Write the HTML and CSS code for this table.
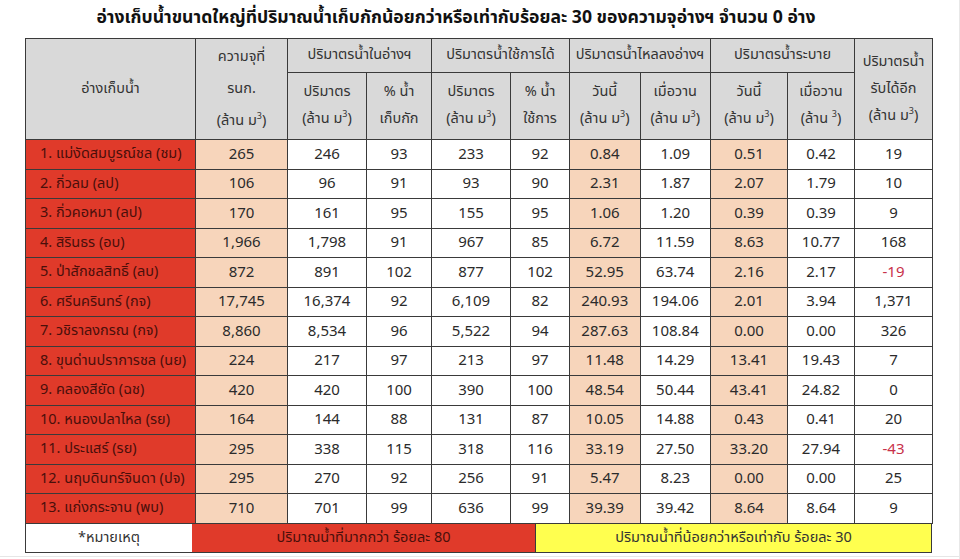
FILE: index.html
```html
<!DOCTYPE html>
<html lang="th">
<head>
<meta charset="utf-8">
<title>อ่างเก็บน้ำขนาดใหญ่</title>
<link rel="stylesheet" href="styles.css">
</head>
<body>
<div class="page">
  <h1 class="title">อ่างเก็บน้ำขนาดใหญ่ที่ปริมาณน้ำเก็บกักน้อยกว่าหรือเท่ากับร้อยละ 30 ของความจุอ่างฯ จำนวน 0 อ่าง</h1>
  <table class="grid">
    <colgroup>
      <col class="c-name"><col class="c-cap"><col class="c-a"><col class="c-b"><col class="c-a"><col class="c-c"><col class="c-d"><col class="c-d"><col class="c-e"><col class="c-f"><col class="c-g">
    </colgroup>
    <thead>
      <tr class="h1">
        <th rowspan="2" class="hname">อ่างเก็บน้ำ</th>
        <th rowspan="2" class="hcap">ความจุที่<br>รนก.<br>(ล้าน ม<sup>3</sup>)</th>
        <th colspan="2">ปริมาตรน้ำในอ่างฯ</th>
        <th colspan="2">ปริมาตรน้ำใช้การได้</th>
        <th colspan="2">ปริมาตรน้ำไหลลงอ่างฯ</th>
        <th colspan="2">ปริมาตรน้ำระบาย</th>
        <th rowspan="2" class="hmore">ปริมาตรน้ำ<br>รับได้อีก<br>(ล้าน ม<sup>3</sup>)</th>
      </tr>
      <tr class="h2">
        <th>ปริมาตร<br>(ล้าน ม<sup>3</sup>)</th>
        <th>% น้ำ<br>เก็บกัก</th>
        <th>ปริมาตร<br>(ล้าน ม<sup>3</sup>)</th>
        <th>% น้ำ<br>ใช้การ</th>
        <th>วันนี้<br>(ล้าน ม<sup>3</sup>)</th>
        <th>เมื่อวาน<br>(ล้าน ม<sup>3</sup>)</th>
        <th>วันนี้<br>(ล้าน ม<sup>3</sup>)</th>
        <th>เมื่อวาน<br>(ล้าน <sup>3</sup>)</th>
      </tr>
    </thead>
    <tbody>
      <tr><td class="name">1. แม่งัดสมบูรณ์ชล (ชม)</td><td class="pe">265</td><td>246</td><td>93</td><td>233</td><td>92</td><td class="pe">0.84</td><td>1.09</td><td class="pe">0.51</td><td>0.42</td><td>19</td></tr>
      <tr><td class="name">2. กิ่วลม (ลป)</td><td class="pe">106</td><td>96</td><td>91</td><td>93</td><td>90</td><td class="pe">2.31</td><td>1.87</td><td class="pe">2.07</td><td>1.79</td><td>10</td></tr>
      <tr><td class="name">3. กิ่วคอหมา (ลป)</td><td class="pe">170</td><td>161</td><td>95</td><td>155</td><td>95</td><td class="pe">1.06</td><td>1.20</td><td class="pe">0.39</td><td>0.39</td><td>9</td></tr>
      <tr><td class="name">4. สิรินธร (อบ)</td><td class="pe">1,966</td><td>1,798</td><td>91</td><td>967</td><td>85</td><td class="pe">6.72</td><td>11.59</td><td class="pe">8.63</td><td>10.77</td><td>168</td></tr>
      <tr><td class="name">5. ป่าสักชลสิทธิ์ (ลบ)</td><td class="pe">872</td><td>891</td><td>102</td><td>877</td><td>102</td><td class="pe">52.95</td><td>63.74</td><td class="pe">2.16</td><td>2.17</td><td class="neg">-19</td></tr>
      <tr><td class="name">6. ศรีนครินทร์ (กจ)</td><td class="pe">17,745</td><td>16,374</td><td>92</td><td>6,109</td><td>82</td><td class="pe">240.93</td><td>194.06</td><td class="pe">2.01</td><td>3.94</td><td>1,371</td></tr>
      <tr><td class="name">7. วชิราลงกรณ (กจ)</td><td class="pe">8,860</td><td>8,534</td><td>96</td><td>5,522</td><td>94</td><td class="pe">287.63</td><td>108.84</td><td class="pe">0.00</td><td>0.00</td><td>326</td></tr>
      <tr><td class="name">8. ขุนด่านปราการชล (นย)</td><td class="pe">224</td><td>217</td><td>97</td><td>213</td><td>97</td><td class="pe">11.48</td><td>14.29</td><td class="pe">13.41</td><td>19.43</td><td>7</td></tr>
      <tr><td class="name">9. คลองสียัด (ฉช)</td><td class="pe">420</td><td>420</td><td>100</td><td>390</td><td>100</td><td class="pe">48.54</td><td>50.44</td><td class="pe">43.41</td><td>24.82</td><td>0</td></tr>
      <tr><td class="name">10. หนองปลาไหล (รย)</td><td class="pe">164</td><td>144</td><td>88</td><td>131</td><td>87</td><td class="pe">10.05</td><td>14.88</td><td class="pe">0.43</td><td>0.41</td><td>20</td></tr>
      <tr><td class="name">11. ประแสร์ (รย)</td><td class="pe">295</td><td>338</td><td>115</td><td>318</td><td>116</td><td class="pe">33.19</td><td>27.50</td><td class="pe">33.20</td><td>27.94</td><td class="neg">-43</td></tr>
      <tr><td class="name">12. นฤบดินทร์จินดา (ปจ)</td><td class="pe">295</td><td>270</td><td>92</td><td>256</td><td>91</td><td class="pe">5.47</td><td>8.23</td><td class="pe">0.00</td><td>0.00</td><td>25</td></tr>
      <tr><td class="name">13. แก่งกระจาน (พบ)</td><td class="pe">710</td><td>701</td><td>99</td><td>636</td><td>99</td><td class="pe">39.39</td><td>39.42</td><td class="pe">8.64</td><td>8.64</td><td>9</td></tr>
    </tbody>
  </table>
  <div class="legend">
    <div class="lg-note">*หมายเหตุ</div>
    <div class="lg-red">ปริมาณน้ำที่มากกว่า ร้อยละ 80</div>
    <div class="lg-yellow">ปริมาณน้ำที่น้อยกว่าหรือเท่ากับ ร้อยละ 30</div>
  </div>
</div>
</body>
</html>
```
FILE: styles.css
```css
html, body {
  margin: 0;
  padding: 0;
  background: #ffffff;
}
body {
  font-family: "Noto Sans Thai", "Tahoma", "Noto Sans", "DejaVu Sans", sans-serif;
  color: #2b2b2b;
  height: 559px;
  overflow: hidden;
  border-right: 1px solid #e8e8e8;
  box-sizing: border-box;
}
.page {
  width: 959px;
  height: 557px;
  border-bottom: 1px solid #e6e6e6;
  box-sizing: border-box;
  padding-left: 25px;
}
.title {
  margin: 0;
  height: 38px;
  line-height: 36px;
  font-size: 17.6px;
  font-weight: bold;
  color: #111;
  text-align: center;
  width: 862px;
  white-space: nowrap;
}
.grid {
  border-collapse: collapse;
  table-layout: fixed;
  width: 907px;
  font-size: 14.5px;
}
.c-name { width: 170px; }
.c-cap { width: 92px; }
.c-a { width: 79px; }
.c-b { width: 65px; }
.c-c { width: 59px; }
.c-d { width: 70.5px; }
.c-e { width: 77px; }
.c-f { width: 67px; }
.c-g { width: 78px; }
.grid th, .grid td {
  border: 1px solid #3a3a3a;
  padding: 0;
  text-align: center;
  vertical-align: middle;
  overflow: hidden;
  white-space: nowrap;
}
.grid th {
  background: #d9d9d9;
  font-weight: normal;
  color: #333;
  line-height: 27px;
}
.h1 { height: 34px; }
.h2 { height: 67px; }
.hcap { line-height: 32px !important; }
sup {
  font-size: 9px;
  line-height: 0;
  vertical-align: 6px;
}
.grid td {
  height: 28.5px;
  font-size: 15px;
  color: #2b2b2b;
}
.grid td.name {
  background: #e03a2a;
  text-align: left;
  padding-left: 14px;
  color: #4a0f0a;
  font-size: 14.5px;
}
.grid td.pe { background: #f7d5bb; }
.grid td.neg { color: #c8314a; }
.legend {
  display: flex;
  width: 907px;
  height: 29px;
  border: 1px solid #3a3a3a;
  border-top: none;
  box-sizing: border-box;
  font-size: 14.5px;
  line-height: 28px;
  text-align: center;
}
.lg-note {
  width: 166px;
  background: #fff;
  color: #333;
}
.lg-red {
  width: 343px;
  background: #e03a2a;
  color: #4a0f0a;
  border-right: 1px solid #3a3a3a;
}
.lg-yellow {
  flex: 1;
  background: #ffff4f;
  color: #333;
}
```
